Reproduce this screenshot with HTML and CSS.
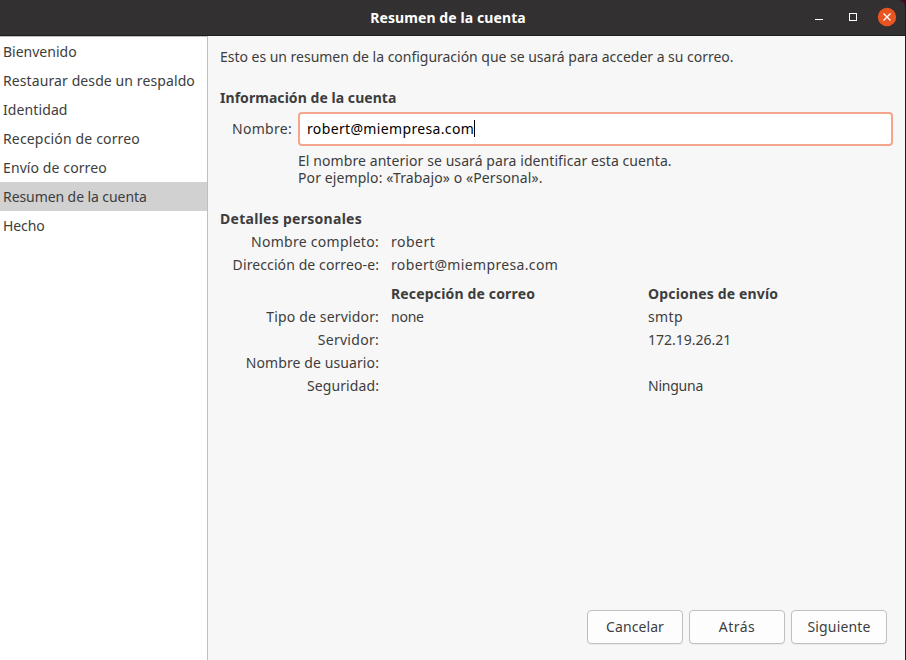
FILE: index.html
```html
<!DOCTYPE html>
<html lang="es">
<head>
<meta charset="utf-8">
<title>Resumen de la cuenta</title>
<link rel="stylesheet" href="styles.css">
</head>
<body>
<div class="window">
  <header class="titlebar">
    <h1 class="title track-1">Resumen de la cuenta</h1>
    <div class="controls">
      <svg class="control" viewBox="0 0 20 20"><path d="M6 12.5h8" stroke="#fff" fill="none"/></svg>
      <svg class="control" viewBox="0 0 20 20"><rect x="6.5" y="6.5" width="7" height="7" stroke="#fff" fill="none"/></svg>
      <svg class="control" viewBox="0 0 20 20"><circle cx="10" cy="10" r="9.2" fill="#e95420"/><path d="M6.5 6.5l7 7M13.5 6.5l-7 7" stroke="#fff" stroke-width="1.4" fill="none"/></svg>
    </div>
  </header>
  <div class="body">
    <nav class="sidebar">
      <div class="step">Bienvenido</div>
      <div class="step track-1">Restaurar desde un respaldo</div>
      <div class="step track-1">Identidad</div>
      <div class="step track-2">Recepción de correo</div>
      <div class="step track-1">Envío de correo</div>
      <div class="step active tight-1">Resumen de la cuenta</div>
      <div class="step tight-1">Hecho</div>
    </nav>
    <main class="content">
      <p class="intro">Esto es un resumen de la configuración que se usará para acceder a su correo.</p>
      <h2 class="heading heading-info">Información de la cuenta</h2>
      <div class="field">
        <span class="field-label track-3">Nombre:</span>
        <div class="entry"><span class="track-4">robert@miempresa.com</span><span class="caret"></span></div>
      </div>
      <div class="hint">
        <div class="hint-line">El nombre anterior se usará para identificar esta cuenta.</div>
        <div class="track-1">Por ejemplo: «Trabajo» o «Personal».</div>
      </div>
      <h2 class="heading details-heading track-3">Detalles personales</h2>
      <div class="details">
        <span class="label track-3">Nombre completo:</span><span class="track-5">robert</span><span></span>
        <span class="label track-1">Dirección de correo-e:</span><span class="track-4">robert@miempresa.com</span><span></span>
      </div>
      <div class="details servers">
        <span></span><b class="track-2">Recepción de correo</b><b class="track-2">Opciones de envío</b>
        <span class="label track-2">Tipo de servidor:</span><span class="tight-2">none</span><span class="track-4">smtp</span>
        <span class="label track-3">Servidor:</span><span></span><span>172.19.26.21</span>
        <span class="label track-1">Nombre de usuario:</span><span></span><span></span>
        <span class="label track-1">Seguridad:</span><span></span><span class="tight-2">Ninguna</span>
      </div>
      <footer class="actions">
        <button class="button track-1">Cancelar</button>
        <button class="button track-5">Atrás</button>
        <button class="button track-2">Siguiente</button>
      </footer>
    </main>
  </div>
</div>
</body>
</html>
```

FILE: styles.css
```css
* { box-sizing: border-box; }
body {
  margin: 0;
  background: #3d0b25;
  color: #3d3d3d;
  font: 14px/17px "Noto Sans", "Open Sans", sans-serif;
}
.window { display: flex; flex-direction: column; width: 905px; height: 660px; }
.titlebar {
  display: grid;
  grid-template-columns: 1fr auto 1fr;
  align-items: center;
  height: 36px;
  padding: 0 8px 0 0;
  background: #323030;
  border-bottom: 1px solid #1e1c1c;
  border-top-right-radius: 7px;
  color: #fff;
}
.title { grid-column: 2; margin: 0 0 0 -1px; font-size: 14px; line-height: 17px; font-weight: 700; }
.controls { display: flex; justify-content: flex-end; gap: 14px; margin-top: -1px; }
.control { display: block; width: 20px; height: 20px; }
.body { display: flex; flex: 1; min-height: 0; }
.sidebar {
  width: 208px;
  background: #fff;
  border-top: 1px solid #bfbfbf;
  border-right: 1px solid #bfbfbf;
}
.step { height: 29px; padding: 6px 3px; white-space: nowrap; }
.active { background: #d1d1d1; }
.content {
  display: flex;
  flex: 1;
  flex-direction: column;
  padding: 12px 12px 16px;
  background: #f7f7f7;
  white-space: nowrap;
}
.intro { margin: 0 0 24px; letter-spacing: -.02px; }
.heading { margin: 0; font-size: 14px; line-height: 17px; font-weight: 700; }
.heading-info { letter-spacing: .05px; }
.field { display: flex; align-items: center; gap: 6px; margin-top: 6px; }
.field-label { width: 72px; padding-bottom: 2px; text-align: right; }
.entry {
  display: flex;
  align-items: center;
  flex: 1;
  height: 34px;
  padding: 0 7px 1px;
  border: 2px solid #f5a58b;
  border-radius: 4px;
  background: #fff;
  color: #000;
}
.caret { width: 1px; height: 17px; background: #000; }
.hint { margin: 6px 0 0 78px; }
.hint-line { letter-spacing: .08px; }
.details-heading { margin-top: 24px; }
.details {
  display: grid;
  grid-template-columns: 159px 245px 245px;
  grid-auto-rows: 17px;
  gap: 6px 12px;
  margin-top: 6px;
}
.servers { margin-top: 12px; }
.label { text-align: right; }
.actions { display: flex; justify-content: flex-end; gap: 6px; margin: auto 6px 0 0; }
.button {
  width: 96px;
  height: 34px;
  padding: 0 0 2px;
  border: 1px solid #c0c0c0;
  border-radius: 4px;
  background: #fdfdfd;
  box-shadow: 0 1px 1px rgba(0, 0, 0, .05);
  color: inherit;
  font: inherit;
}
.tight-1 { letter-spacing: -.08px; }
.tight-2 { letter-spacing: -.24px; }
.track-1 { letter-spacing: .1px; }
.track-2 { letter-spacing: .16px; }
.track-3 { letter-spacing: .28px; }
.track-4 { letter-spacing: .35px; }
.track-5 { letter-spacing: .5px; }
```
